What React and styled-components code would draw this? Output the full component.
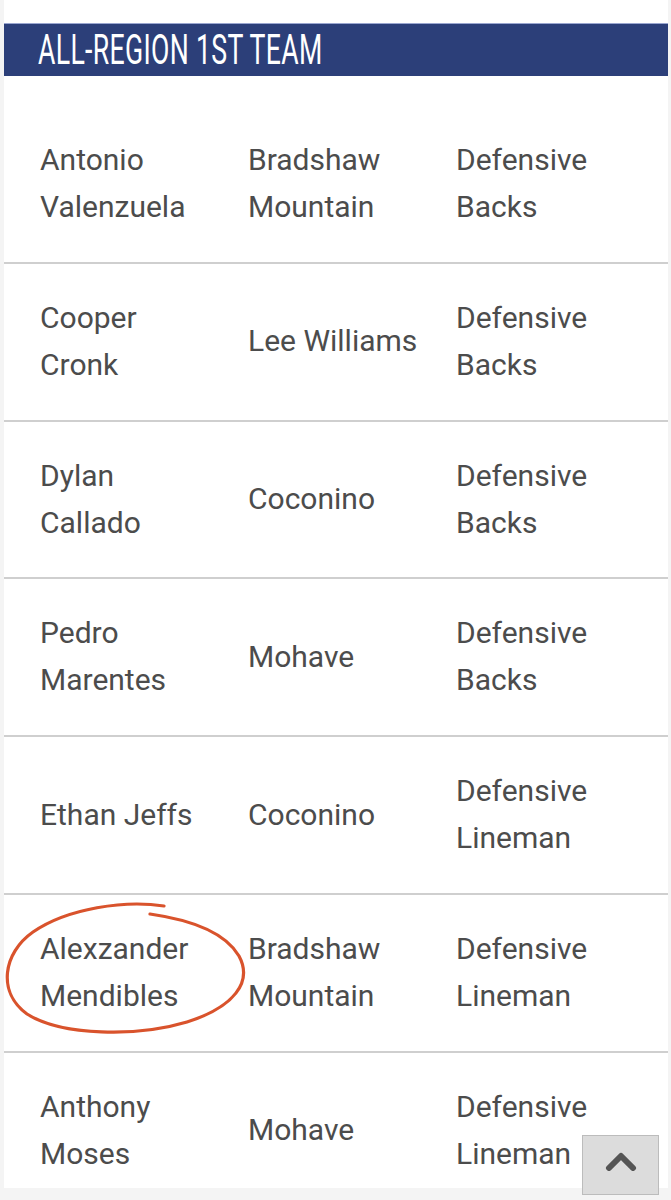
import React from "react"
import styled, { createGlobalStyle } from "styled-components"

const GlobalStyle = createGlobalStyle`
  html, body {
    margin: 0;
    padding: 0;
    background: #f4f4f4;
  }
`

const Page = styled.div`
  position: relative;
  width: 671px;
  height: 1200px;
  overflow: hidden;
`

const Card = styled.section`
  margin: 0 3px 0 4px;
  height: 1188px;
  overflow: hidden;
  background: #ffffff;
  padding-top: 23px;
  box-sizing: border-box;
`

const TitleBar = styled.header`
  height: 53px;
  background: #2c3f79;
  border-top: 1px solid #9aa6d0;
  box-sizing: border-box;
  display: flex;
  align-items: center;
  padding-left: 34px;
  overflow: hidden;
`

const Title = styled.h2`
  margin: 0;
  color: #ffffff;
  font-family: Roboto, "Liberation Sans", sans-serif;
  font-weight: 400;
  font-size: 42px;
  line-height: 1;
  letter-spacing: 0.5px;
  white-space: nowrap;
  transform: scaleX(0.635);
  transform-origin: left center;
`

const Table = styled.div`
  margin-top: 30px;
`

const Row = styled.div`
  display: grid;
  grid-template-columns: 208px 208px 1fr;
  align-items: center;
  padding: 31px 0 31px 36px;
  border-bottom: 2px solid #cfcfcf;
`

const Cell = styled.div`
  padding-right: 34px;
  color: #4c4c4c;
  font-family: Roboto, "Noto Sans", sans-serif;
  font-size: 30px;
  line-height: 46.9px;
`

const TopButton = styled.button`
  position: absolute;
  left: 582px;
  top: 1135px;
  width: 77px;
  height: 60px;
  padding: 0 0 8px;
  background: #dcdcdc;
  border: 1px solid #bcbcbc;
  display: flex;
  align-items: center;
  justify-content: center;
`

const Circle = styled.svg`
  position: absolute;
  left: 0;
  top: 0;
  pointer-events: none;
`

const players = [
  ["Antonio Valenzuela", "Bradshaw Mountain", "Defensive Backs"],
  ["Cooper Cronk", "Lee Williams", "Defensive Backs"],
  ["Dylan Callado", "Coconino", "Defensive Backs"],
  ["Pedro Marentes", "Mohave", "Defensive Backs"],
  ["Ethan Jeffs", "Coconino", "Defensive Lineman"],
  ["Alexzander Mendibles", "Bradshaw Mountain", "Defensive Lineman"],
  ["Anthony Moses", "Mohave", "Defensive Lineman"],
]

export default function App() {
  return (
    <Page>
      <GlobalStyle />
      <Card>
        <TitleBar>
          <Title>ALL-REGION 1ST TEAM</Title>
        </TitleBar>
        <Table>
          {players.map((p, i) => (
            <Row key={i}>
              <Cell>{p[0]}</Cell>
              <Cell>{p[1]}</Cell>
              <Cell>{p[2]}</Cell>
            </Row>
          ))}
        </Table>
      </Card>
      <Circle width="671" height="1200" viewBox="0 0 671 1200">
        <path
          d="M164 906 C 125 900, 68 908, 33 932 C 3 953, -3 992, 27 1014 C 62 1036, 137 1037, 187 1022 C 234 1007, 253 982, 239 956 C 225 932, 192 920, 150 914"
          fill="none"
          stroke="#d9532c"
          strokeWidth="3.2"
          strokeLinecap="round"
        />
      </Circle>
      <TopButton aria-label="Back to top">
        <svg width="32" height="20" viewBox="0 0 32 20">
          <path d="M4 17 L16 5 L28 17" fill="none" stroke="#555555" strokeWidth="6" strokeLinecap="round" strokeLinejoin="round" />
        </svg>
      </TopButton>
    </Page>
  )
}
